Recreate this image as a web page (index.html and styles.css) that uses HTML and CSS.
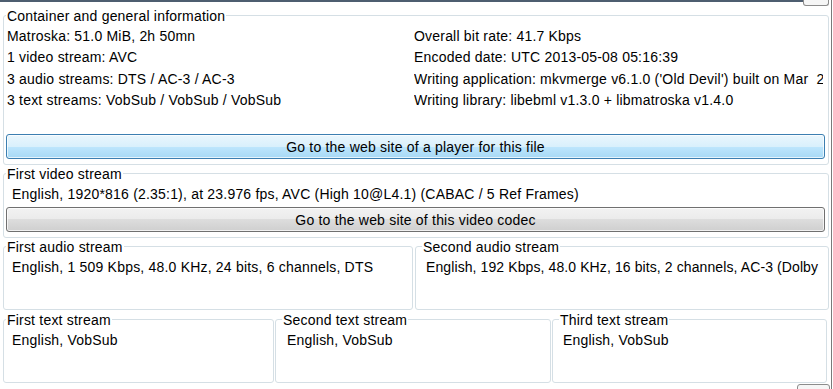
FILE: index.html
```html
<!DOCTYPE html>
<html lang="en">
<head>
    <meta charset="UTF-8">
    <meta name="viewport" content="width=device-width, initial-scale=1.0">
    <title>MediaInfo - Basic</title>
    <link rel="stylesheet" href="styles.css">
</head>
<body>
  <div class="app">
    <div class="topbar">
      <div class="topline"></div>
      <div class="tab-btn"></div>
    </div>

    <fieldset class="group general">
      <legend>Container and general information</legend>
      <div class="info">
        <div class="col">
          <div>Matroska: 51.0 MiB, 2h 50mn</div>
          <div>1 video stream: AVC</div>
          <div>3 audio streams: DTS / AC-3 / AC-3</div>
          <div>3 text streams: VobSub / VobSub / VobSub</div>
        </div>
        <div class="col col-right">
          <div>Overall bit rate: 41.7 Kbps</div>
          <div>Encoded date: UTC 2013-05-08 05:16:39</div>
          <div>Writing application: mkvmerge v6.1.0 ('Old Devil') built on Mar&nbsp; 2</div>
          <div>Writing library: libebml v1.3.0 + libmatroska v1.4.0</div>
        </div>
      </div>
      <button class="btn btn-default">Go to the web site of a player for this file</button>
    </fieldset>

    <fieldset class="group video">
      <legend>First video stream</legend>
      <div class="stream-text">English, 1920*816 (2.35:1), at 23.976 fps, AVC (High 10@L4.1) (CABAC / 5 Ref Frames)</div>
      <button class="btn">Go to the web site of this video codec</button>
    </fieldset>

    <div class="row">
      <fieldset class="group stream audio-1 first">
        <legend>First audio stream</legend>
        <div class="stream-text">English, 1 509 Kbps, 48.0 KHz, 24 bits, 6 channels, DTS</div>
      </fieldset>
      <fieldset class="group stream audio-2">
        <legend>Second audio stream</legend>
        <div class="stream-text">English, 192 Kbps, 48.0 KHz, 16 bits, 2 channels, AC-3 (Dolby</div>
      </fieldset>
    </div>

    <div class="row row-text">
      <fieldset class="group stream text-1 first">
        <legend>First text stream</legend>
        <div class="stream-text">English, VobSub</div>
      </fieldset>
      <fieldset class="group stream text-2">
        <legend>Second text stream</legend>
        <div class="stream-text">English, VobSub</div>
      </fieldset>
      <fieldset class="group stream text-3">
        <legend>Third text stream</legend>
        <div class="stream-text">English, VobSub</div>
      </fieldset>
    </div>

    <div class="bottombar">
      <div class="corner-btn"></div>
    </div>
  </div>
</body>
</html>
```

FILE: styles.css
```css
body {
  margin: 0;
  padding: 0;
  background-color: #fff;
  font-family: "Liberation Sans", Arial, sans-serif;
  font-size: 14px;
  letter-spacing: 0.2px;
  color: #000;
}
.app {
  width: 831px;
  height: 389px;
  border-right: 1px solid #7a7a7a;
  overflow: hidden;
}
.topbar {
  display: flex;
  height: 7px;
}
.topline {
  flex: 1;
  height: 2px;
  background-color: #4e5e70;
}
.tab-btn {
  width: 24px;
  height: 5px;
  margin-right: 2px;
  border: 1px solid #8c8c8c;
  border-top: none;
  border-radius: 0 0 3px 3px;
  background-color: #f6f6f6;
}

/* group boxes */
.group {
  margin: 0 2px 0 3px;
  padding: 0 3px 5px 3px;
  border: 1px solid #d5dfe5;
  border-radius: 3px;
  min-width: 0;
  box-sizing: border-box;
}
.group legend {
  padding: 2px 1px 0;
  margin-left: -1px;
  line-height: 14px;
  white-space: nowrap;
}
.info {
  display: grid;
  grid-template-columns: 407px 1fr;
  padding-top: 3px;
  line-height: 21.3px;
}
.col div {
  white-space: nowrap;
}
.col-right {
  overflow: hidden;
  margin-right: 2px;
}
.stream-text {
  margin-top: 3px;
  padding-left: 5px;
  line-height: 21px;
  white-space: nowrap;
  overflow: hidden;
}

/* buttons */
.btn {
  display: block;
  width: calc(100% + 1px);
  height: 25px;
  margin-left: -1px;
  padding: 0;
  border: 1px solid #707070;
  border-radius: 3px;
  font-family: inherit;
  font-size: 14px;
  letter-spacing: 0.2px;
  color: #000;
  background: linear-gradient(#f2f2f2 0%, #ebebeb 50%, #dddddd 50%, #cfcfcf 100%);
  box-shadow: inset 0 0 0 1px rgba(255, 255, 255, 0.7);
}
.btn-default {
  margin-top: 23px;
  border-color: #3c7fb1;
  background: linear-gradient(#eaf6fd 0%, #d9f0fc 50%, #bee6fd 50%, #a7d9f5 100%);
}
.video .btn {
  margin-top: 2px;
}

/* stream rows */
.row {
  display: flex;
  margin-left: 3px;
}
.row .group {
  margin: 0;
  height: 72px;
  padding-left: 7px;
}
.row .group .stream-text {
  padding-left: 3px;
}
.row .group.first {
  padding-left: 3px;
}
.row .group.first .stream-text {
  padding-left: 5px;
}
.audio-1 {
  width: 410px;
}
.audio-2 {
  width: 414px;
  margin-left: 2px !important;
}
.audio-2 .stream-text {
  letter-spacing: 0.1px;
}
.row-text {
  margin-top: 1px;
}
.text-1 {
  width: 271px;
}
.text-2 {
  width: 276px;
  margin-left: 1px !important;
}
.text-3 {
  width: 275px;
  margin-left: 1px !important;
}
.text-2 .stream-text {
  padding-left: 4px !important;
}
.bottombar {
  display: flex;
  justify-content: flex-end;
  margin-top: 1px;
}
.corner-btn {
  width: 31px;
  height: 10px;
  margin-right: 1px;
  border: 1px solid #8c8c8c;
  border-radius: 3px 3px 0 0;
  background-color: #f6f6f6;
}
```
